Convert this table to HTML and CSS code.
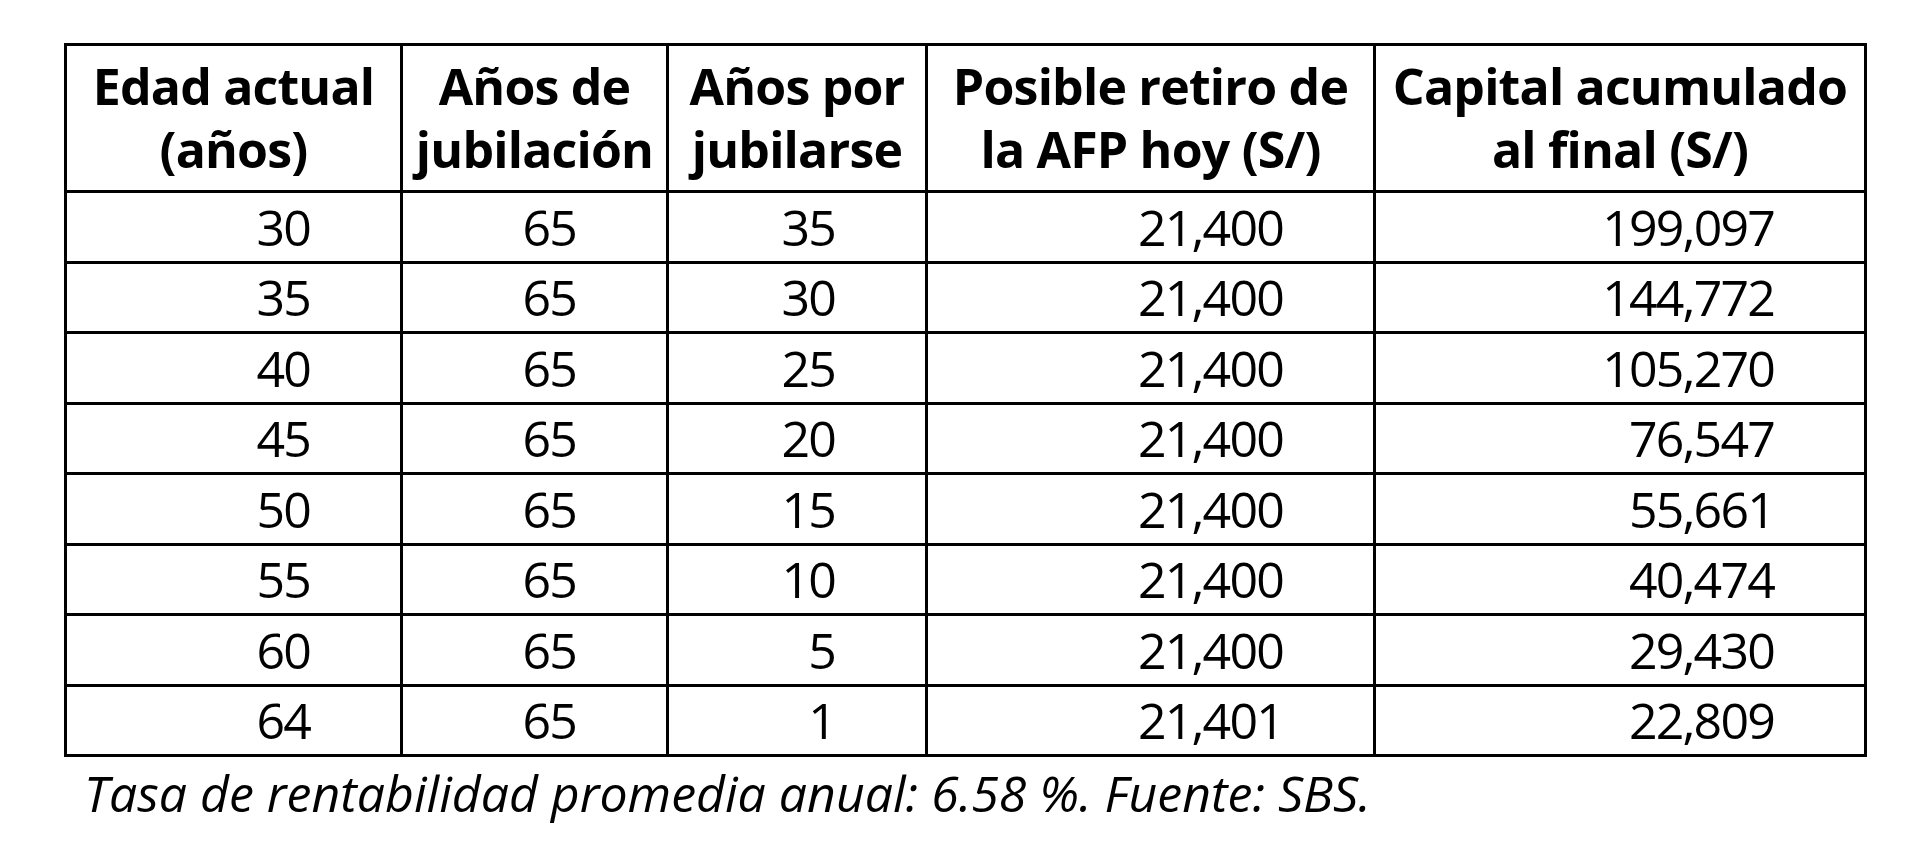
FILE: index.html
```html
<!DOCTYPE html>
<html lang="es">
<head>
<meta charset="utf-8">
<title>Capital acumulado AFP</title>
<link rel="stylesheet" href="styles.css">
</head>
<body>
<div class="page">
  <table class="afp">
    <colgroup>
      <col class="c1"><col class="c2"><col class="c3"><col class="c4"><col class="c5">
    </colgroup>
    <thead>
      <tr>
        <th>Edad actual<br>(años)</th>
        <th>Años de<br>jubilación</th>
        <th>Años por<br>jubilarse</th>
        <th>Posible retiro de<br>la AFP hoy (S/)</th>
        <th>Capital acumulado<br>al final (S/)</th>
      </tr>
    </thead>
    <tbody>
      <tr><td>30</td><td>65</td><td>35</td><td>21,400</td><td>199,097</td></tr>
      <tr><td>35</td><td>65</td><td>30</td><td>21,400</td><td>144,772</td></tr>
      <tr><td>40</td><td>65</td><td>25</td><td>21,400</td><td>105,270</td></tr>
      <tr><td>45</td><td>65</td><td>20</td><td>21,400</td><td>76,547</td></tr>
      <tr><td>50</td><td>65</td><td>15</td><td>21,400</td><td>55,661</td></tr>
      <tr><td>55</td><td>65</td><td>10</td><td>21,400</td><td>40,474</td></tr>
      <tr><td>60</td><td>65</td><td>5</td><td>21,400</td><td>29,430</td></tr>
      <tr><td>64</td><td>65</td><td>1</td><td>21,401</td><td>22,809</td></tr>
    </tbody>
  </table>
  <p class="caption">Tasa de rentabilidad promedia anual: 6.58 %. Fuente: SBS.</p>
</div>
</body>
</html>
```
FILE: styles.css
```css
html, body {
  margin: 0;
  padding: 0;
  background: #ffffff;
}

.page {
  padding: 43px 0 0 64px;
  font-family: "Open Sans", "Noto Sans", "Liberation Sans", sans-serif;
  color: #000000;
}

.afp {
  border-collapse: collapse;
  table-layout: fixed;
  width: 1800px;
}

.c1 { width: 336px; }
.c2 { width: 266px; }
.c3 { width: 259px; }
.c4 { width: 448px; }
.c5 { width: 491px; }

.afp th,
.afp td {
  border: 3px solid #000000;
  padding: 0;
  box-sizing: border-box;
}

.afp th {
  height: 147px;
  font-weight: 700;
  font-size: 50px;
  line-height: 63px;
  letter-spacing: -0.8px;
  text-align: center;
  vertical-align: middle;
  white-space: nowrap;
}

.afp td {
  height: 70.5px;
  font-weight: 400;
  font-size: 50px;
  line-height: 60px;
  letter-spacing: -1.8px;
  text-align: right;
  padding-right: 90px;
  vertical-align: middle;
}

.caption {
  margin: 0;
  padding: 6px 0 0 20px;
  font-style: italic;
  font-size: 50px;
  line-height: 60px;
}
```
